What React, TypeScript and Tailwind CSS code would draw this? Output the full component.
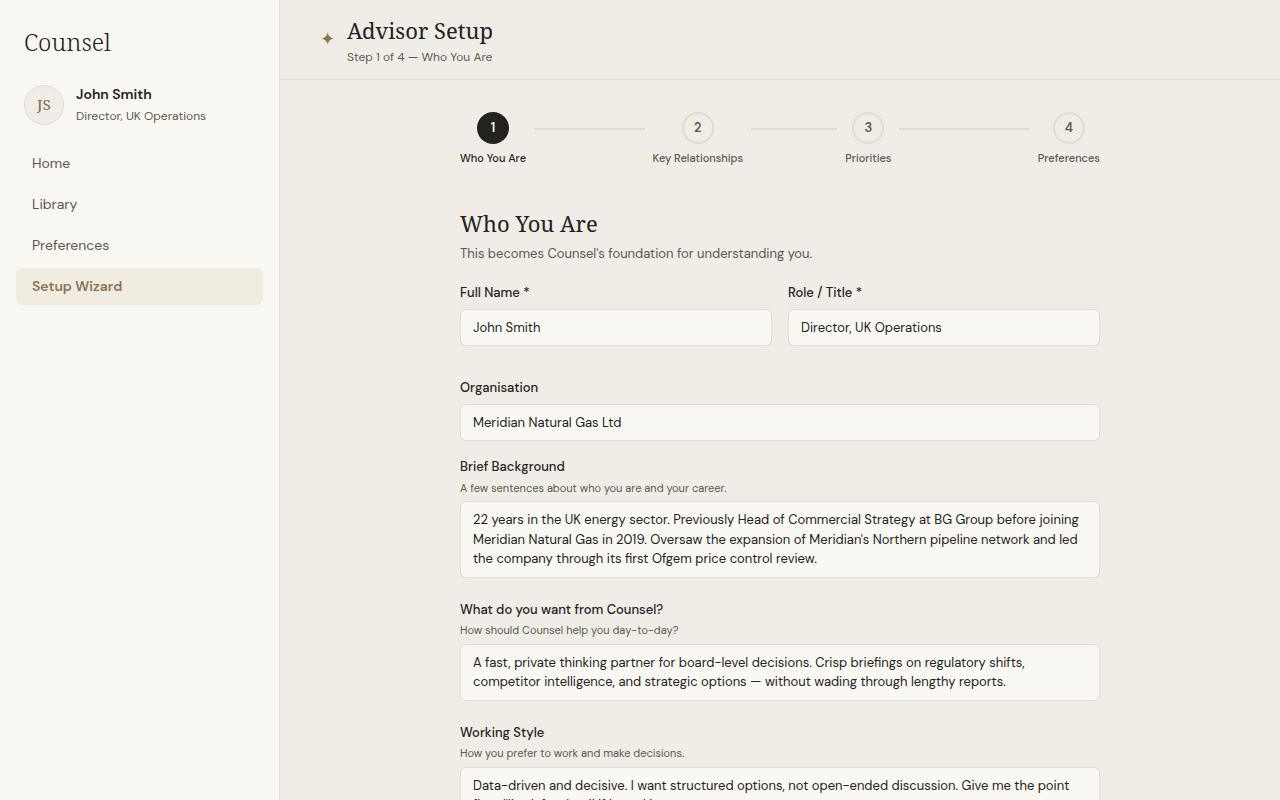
import type { ReactNode } from 'react';

const navItems = ['Home', 'Library', 'Preferences', 'Setup Wizard'];
const activeNav = 'Setup Wizard';

const steps = ['Who You Are', 'Key Relationships', 'Priorities', 'Preferences'];
const currentStep = 0;

const controlClass =
  'block w-full resize-none rounded-[6px] border border-[#e2dbd0] bg-[#faf8f3] px-3 py-2 text-[13px] leading-normal text-[#24221e] outline-none focus:border-[#8b7355]';

function Sidebar() {
  return (
    <aside className="flex w-[280px] shrink-0 flex-col border-r border-[#e0dcd4] bg-[#f9f7f2] py-6">
      <div className="px-6 font-['Noto_Serif',serif] text-2xl leading-9 font-light">Counsel</div>
      <div className="mt-6 flex items-center gap-3 px-6">
        <div className="flex size-10 items-center justify-center rounded-full border border-[#e0dcd4] bg-[#f0ede6] font-['Noto_Serif',serif] text-[15px] font-medium text-[#8b7355]">
          JS
        </div>
        <div className="flex flex-col gap-0.5">
          <span className="text-sm leading-normal font-semibold">John Smith</span>
          <span className="text-xs leading-normal text-[#5c5850]">Director, UK Operations</span>
        </div>
      </div>
      <nav className="mt-5 flex flex-col gap-1 px-4">
        {navItems.map((item) => (
          <a
            key={item}
            href="#"
            aria-current={item === activeNav ? 'page' : undefined}
            className={
              item === activeNav
                ? 'rounded-[6px] bg-[#f1ece0] px-4 py-2 text-sm leading-normal font-semibold text-[#8b7355]'
                : 'rounded-[6px] px-4 py-2 text-sm leading-normal text-[#5c5850]'
            }
          >
            {item}
          </a>
        ))}
      </nav>
    </aside>
  );
}

function Stepper() {
  return (
    <ol className="flex">
      {steps.map((label, i) => {
        const active = i === currentStep;
        const last = i === steps.length - 1;
        return (
          <li key={label} className={last ? 'flex items-start' : 'flex flex-1 items-start'}>
            <div className="flex flex-col items-center gap-1.5">
              <span
                className={
                  active
                    ? 'flex size-8 items-center justify-center rounded-full bg-[#24221e] text-[13px] font-semibold text-[#faf8f3]'
                    : 'flex size-8 items-center justify-center rounded-full border-2 border-[#e0dcd4] text-[13px] font-semibold text-[#5c5850]'
                }
              >
                {i + 1}
              </span>
              <span
                className={
                  active
                    ? 'text-[11px] leading-normal font-medium whitespace-nowrap'
                    : 'text-[11px] leading-normal font-medium whitespace-nowrap text-[#5c5850]'
                }
              >
                {label}
              </span>
            </div>
            {!last && <span className="mx-2 mt-4 h-0.5 flex-1 bg-[#e0dcd4]" />}
          </li>
        );
      })}
    </ol>
  );
}

function Field({ id, label, hint, children }: { id: string; label: string; hint?: string; children: ReactNode }) {
  return (
    <div>
      <label
        htmlFor={id}
        className={
          hint
            ? 'mb-[3px] block text-[13px] leading-normal font-medium'
            : 'mb-1.5 block text-[13px] leading-normal font-medium'
        }
      >
        {label}
      </label>
      {hint && <p className="mb-[5px] text-[11px] leading-normal text-[#5c5850]">{hint}</p>}
      {children}
    </div>
  );
}

export default function App() {
  return (
    <div className="flex h-screen overflow-hidden bg-[#f0ede6] font-['DM_Sans','Open_Sans',sans-serif] text-[#24221e]">
      <Sidebar />
      <div className="flex min-w-0 flex-1 flex-col">
        <header className="flex items-center gap-3 border-b border-[#e0dcd4] px-10 pt-3.5 pb-[13px]">
          <span className="pb-0.5 text-lg leading-6 text-[#8b7355]" aria-hidden="true">✦</span>
          <div>
            <h1 className="font-['Noto_Serif',serif] text-[22px] leading-normal">Advisor Setup</h1>
            <p className="mt-px text-xs leading-normal text-[#5c5850]">Step 1 of 4 — Who You Are</p>
          </div>
        </header>
        <main className="flex-1 overflow-hidden px-10 py-8">
          <div className="mx-auto max-w-[640px]">
            <Stepper />
            <h2 className="mt-10 font-['Noto_Serif',serif] text-[22px] leading-normal">Who You Are</h2>
            <p className="mt-1 text-[13px] leading-normal text-[#5c5850]">
              This becomes Counsel's foundation for understanding you.
            </p>
            <form className="mt-5 flex flex-col">
              <div className="mb-8 grid grid-cols-2 gap-4">
                <Field id="name" label="Full Name *">
                  <input id="name" className={controlClass} defaultValue="John Smith" />
                </Field>
                <Field id="role" label="Role / Title *">
                  <input id="role" className={controlClass} defaultValue="Director, UK Operations" />
                </Field>
              </div>
              <div className="mb-4">
                <Field id="org" label="Organisation">
                  <input id="org" className={controlClass} defaultValue="Meridian Natural Gas Ltd" />
                </Field>
              </div>
              <div className="flex flex-col gap-[22px]">
                <Field id="background" label="Brief Background" hint="A few sentences about who you are and your career.">
                  <textarea
                    id="background"
                    rows={3}
                    className={controlClass}
                    defaultValue="22 years in the UK energy sector. Previously Head of Commercial Strategy at BG Group before joining Meridian Natural Gas in 2019. Oversaw the expansion of Meridian's Northern pipeline network and led the company through its first Ofgem price control review."
                  />
                </Field>
                <Field id="goals" label="What do you want from Counsel?" hint="How should Counsel help you day-to-day?">
                  <textarea
                    id="goals"
                    rows={2}
                    className={controlClass}
                    defaultValue="A fast, private thinking partner for board-level decisions. Crisp briefings on regulatory shifts, competitor intelligence, and strategic options — without wading through lengthy reports."
                  />
                </Field>
                <Field id="style" label="Working Style" hint="How you prefer to work and make decisions.">
                  <textarea
                    id="style"
                    rows={2}
                    className={controlClass}
                    defaultValue="Data-driven and decisive. I want structured options, not open-ended discussion. Give me the point first, I'll ask for detail if I need it."
                  />
                </Field>
              </div>
            </form>
          </div>
        </main>
      </div>
    </div>
  );
}
